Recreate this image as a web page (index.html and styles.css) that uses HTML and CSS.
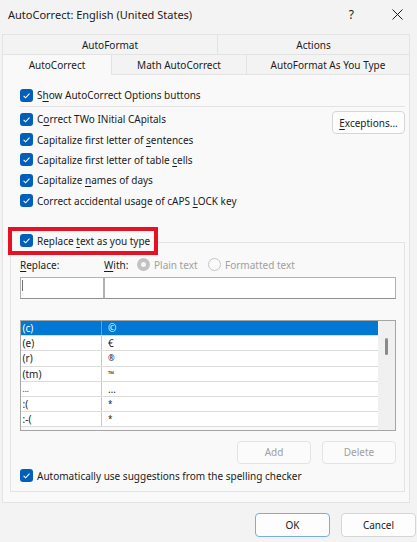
FILE: index.html
```html
<!DOCTYPE html>
<html lang="en">
<head>
<meta charset="utf-8">
<title>AutoCorrect: English (United States)</title>
<link rel="stylesheet" href="styles.css">
</head>
<body>
<div class="dialog">
  <div class="titlebar">
    <span class="title">AutoCorrect: English (United States)</span>
    <span class="help">?</span>
    <span class="close"><svg width="11" height="11" viewBox="0 0 11 11"><path d="M0.5 0.5 L10.5 10.5 M10.5 0.5 L0.5 10.5" stroke="#1a1a1a" stroke-width="1" fill="none"/></svg></span>
  </div>

  <div class="tabs">
    <div class="tabrow row1">
      <div class="tab t-autoformat">AutoFormat</div>
      <div class="tab t-actions">Actions</div>
    </div>
    <div class="tabrow row2">
      <div class="tab t-autocorrect active">AutoCorrect</div>
      <div class="tab t-math">Math AutoCorrect</div>
      <div class="tab t-ayt">AutoFormat As You Type</div>
    </div>
  </div>

  <div class="panel">
    <div class="top">
      <div class="check-row show-row">
        <span class="cb"><svg viewBox="0 0 13 13" width="13" height="13"><path d="M3.6 6.9 L5.6 8.8 L9.5 4.6" fill="none" stroke="#fff" stroke-width="1.1"/></svg></span>
        <span>S<u>h</u>ow AutoCorrect Options buttons</span>
      </div>
    </div>
    <div class="separator"></div>
    <div class="opts">
      <div class="opts-list">
        <div class="check-row">
          <span class="cb"><svg viewBox="0 0 13 13" width="13" height="13"><path d="M3.6 6.9 L5.6 8.8 L9.5 4.6" fill="none" stroke="#fff" stroke-width="1.1"/></svg></span>
          <span>C<u>o</u>rrect TWo INitial CApitals</span>
        </div>
        <div class="check-row">
          <span class="cb"><svg viewBox="0 0 13 13" width="13" height="13"><path d="M3.6 6.9 L5.6 8.8 L9.5 4.6" fill="none" stroke="#fff" stroke-width="1.1"/></svg></span>
          <span>Capitalize first letter of <u>s</u>entences</span>
        </div>
        <div class="check-row">
          <span class="cb"><svg viewBox="0 0 13 13" width="13" height="13"><path d="M3.6 6.9 L5.6 8.8 L9.5 4.6" fill="none" stroke="#fff" stroke-width="1.1"/></svg></span>
          <span>Capitalize first letter of table <u>c</u>ells</span>
        </div>
        <div class="check-row">
          <span class="cb"><svg viewBox="0 0 13 13" width="13" height="13"><path d="M3.6 6.9 L5.6 8.8 L9.5 4.6" fill="none" stroke="#fff" stroke-width="1.1"/></svg></span>
          <span>Capitalize <u>n</u>ames of days</span>
        </div>
        <div class="check-row">
          <span class="cb"><svg viewBox="0 0 13 13" width="13" height="13"><path d="M3.6 6.9 L5.6 8.8 L9.5 4.6" fill="none" stroke="#fff" stroke-width="1.1"/></svg></span>
          <span>Correct accidental usage of cAPS <u>L</u>OCK key</span>
        </div>
      </div>
      <button class="btn exceptions"><u>E</u>xceptions...</button>
    </div>

    <div class="legend">
      <span class="cb"><svg viewBox="0 0 13 13" width="13" height="13"><path d="M3.6 6.9 L5.6 8.8 L9.5 4.6" fill="none" stroke="#fff" stroke-width="1.1"/></svg></span>
      <span>Replace <u>t</u>ext as you type</span>
    </div>

    <div class="group">
      <div class="labels">
        <span class="lbl-replace"><u>R</u>eplace:</span>
        <span class="lbl-with"><u>W</u>ith:</span>
        <span class="radio r-plain"><span class="dot on"></span><span class="dis">Plain text</span></span>
        <span class="radio r-formatted"><span class="dot"></span><span class="dis">Formatted text</span></span>
      </div>
      <div class="inputs">
        <div class="field f-replace"><span class="caret"></span></div>
        <div class="field f-with"></div>
      </div>
      <div class="list">
        <div class="rows">
          <div class="row sel"><span class="c1">(c)</span><span class="c2">©</span></div>
          <div class="row"><span class="c1">(e)</span><span class="c2">€</span></div>
          <div class="row"><span class="c1">(r)</span><span class="c2 sym">®</span></div>
          <div class="row"><span class="c1">(tm)</span><span class="c2 sym">™</span></div>
          <div class="row"><span class="c1 small">...</span><span class="c2">…</span></div>
          <div class="row"><span class="c1">:(</span><span class="c2 sym">*</span></div>
          <div class="row"><span class="c1">:-(</span><span class="c2 sym">*</span></div>
        </div>
        <div class="scroll"><span class="thumb"></span></div>
      </div>
      <div class="actions">
        <button class="btn disabled">Add</button>
        <button class="btn disabled">Delete</button>
      </div>
      <div class="check-row last-row">
        <span class="cb"><svg viewBox="0 0 13 13" width="13" height="13"><path d="M3.6 6.9 L5.6 8.8 L9.5 4.6" fill="none" stroke="#fff" stroke-width="1.1"/></svg></span>
        <span>Automatically use suggestions from the spelling checker</span>
      </div>
    </div>
  </div>

  <div class="footer">
    <button class="btn default">OK</button>
    <button class="btn">Cancel</button>
  </div>
</div>
</body>
</html>
```

FILE: styles.css
```css
* { box-sizing: border-box; }

body {
  margin: 0;
  background: #f3f3f3;
  font-family: "Noto Sans", "Open Sans", "DejaVu Sans", sans-serif;
  font-size: 10px;
  color: #1b1b1b;
}

u { text-decoration-thickness: 1px; text-underline-offset: 2px; }

.dialog {
  width: 417px;
  height: 542px;
  overflow: hidden;
}

/* title bar */
.titlebar {
  height: 34px;
  display: flex;
  align-items: center;
  padding: 0 14px 6px 8px;
}
.title { flex: 1; font-size: 11px; }
.help { margin-right: 38px; font-size: 12px; }
.close { display: flex; width: 11px; height: 11px; }

/* tabs */
.tabs { margin-left: 2px; width: 408px; }
.tabrow { display: flex; }
.row1 { height: 20px; }
.row2 { height: 21px; }
.tab {
  display: flex;
  align-items: center;
  justify-content: center;
  border-top: 1px solid #e3e3e3;
  border-left: 1px solid #e3e3e3;
  color: #1b1b1b;
  white-space: nowrap;
}
.row2 .tab { border-bottom: 1px solid #e3e3e3; }
.tab.active { background: #f9f9f9; border-bottom-color: #f9f9f9; }
.t-autoformat { width: 215px; }
.t-actions { flex: 1; border-right: 1px solid #e3e3e3; }
.t-autocorrect { width: 109px; }
.t-math { width: 135px; }
.t-ayt { flex: 1; border-right: 1px solid #e3e3e3; }

/* panel */
.panel {
  margin-left: 2px;
  width: 408px;
  height: 428px;
  background: #f9f9f9;
  border: 1px solid #e3e3e3;
  border-top: none;
  padding: 10px 4px 0 7px;
}
.top { padding-left: 10px; }
.check-row {
  display: flex;
  align-items: center;
  gap: 4px;
  white-space: nowrap;
}
.show-row { height: 20px; }
.cb {
  width: 13px;
  height: 13px;
  border-radius: 3px;
  background: #005fb8;
  display: flex;
  flex-shrink: 0;
}
.cb svg { display: block; }
.separator {
  height: 1px;
  background: #e3e3e3;
  margin: 1px 0 2px 10px;
}
.opts { display: flex; padding-left: 10px; }
.opts-list { flex: 1; }
.opts-list .check-row { height: 20.4px; }

.btn {
  font: inherit;
  color: #1b1b1b;
  background: #fdfdfd;
  border: 1px solid #d6d6d6;
  border-radius: 4px;
  padding: 0;
}
.exceptions {
  width: 73px;
  height: 23px;
  margin-top: 2px;
}

/* replace group */
.legend {
  position: relative;
  z-index: 1;
  margin: 16px 0 0 -2px;
  width: 150px;
  height: 28px;
  border: 4px solid #e81123;
  background: #f9f9f9;
  padding-left: 8px;
  display: flex;
  align-items: center;
  gap: 4px;
  white-space: nowrap;
}
.group {
  margin-top: -13px;
  border: 1px solid #e3e3e3;
  padding: 14px 8px 8px 9px;
}
.labels {
  height: 16px;
  display: flex;
  align-items: center;
  white-space: nowrap;
}
.lbl-replace { width: 84px; }
.lbl-with { width: 33px; }
.radio { display: flex; align-items: center; gap: 4px; }
.r-plain { width: 71px; }
.dot {
  width: 13px;
  height: 13px;
  border-radius: 50%;
  border: 1px solid #c4c4c4;
  background: #fbfbfb;
}
.dot.on {
  border: 4px solid #c2c2c2;
  background: #f5f5f5;
}
.dis { color: #a0a0a0; }

.inputs { display: flex; margin-top: 4px; height: 22px; }
.field {
  background: #fff;
  border: 1px solid #b2b2b2;
  border-bottom-color: #8f8f8f;
  height: 22px;
}
.f-replace { width: 84px; padding: 2px 0 0 1px; }
.f-with { flex: 1; }
.caret { display: block; width: 1px; height: 11px; background: #707070; }

.list {
  margin-top: 21px;
  height: 111px;
  border: 1px solid #a5a5a5;
  display: flex;
  overflow: hidden;
}
.rows { width: 357px; }
.row {
  display: flex;
  height: 15.2px;
  line-height: 14px;
  background: #fff;
  border-bottom: 1px solid #dcdcdc;
}
.c1 {
  width: 81px;
  padding-left: 1.5px;
  border-right: 1px solid #c8c8c8;
}
.c2 { padding-left: 6px; }
.c2.sym { font-size: 8px; }
.row.sel { background: #0078d4; color: #fff; }
.row.sel .c1 { border-right-color: #5aa3e2; }
.small { font-size: 8px; }
.scroll {
  flex: 1;
  background: #f0f0f0;
  padding: 17px 0 0 7px;
}
.thumb {
  display: block;
  width: 3px;
  height: 17px;
  border-radius: 2px;
  background: #8a8a8a;
}

.actions {
  margin-top: 10px;
  display: flex;
  justify-content: flex-end;
  gap: 11px;
}
.btn.disabled {
  width: 74px;
  height: 23px;
  color: #a0a0a0;
  background: #fbfbfb;
  border-color: #e3e3e3;
}
.last-row { margin-top: 5px; height: 14px; }

/* footer */
.footer {
  display: flex;
  justify-content: flex-end;
  gap: 11px;
  padding: 10px 1px 0 0;
}
.footer .btn { width: 75px; height: 24px; }
.btn.default { border-color: #78ade4; }
```
